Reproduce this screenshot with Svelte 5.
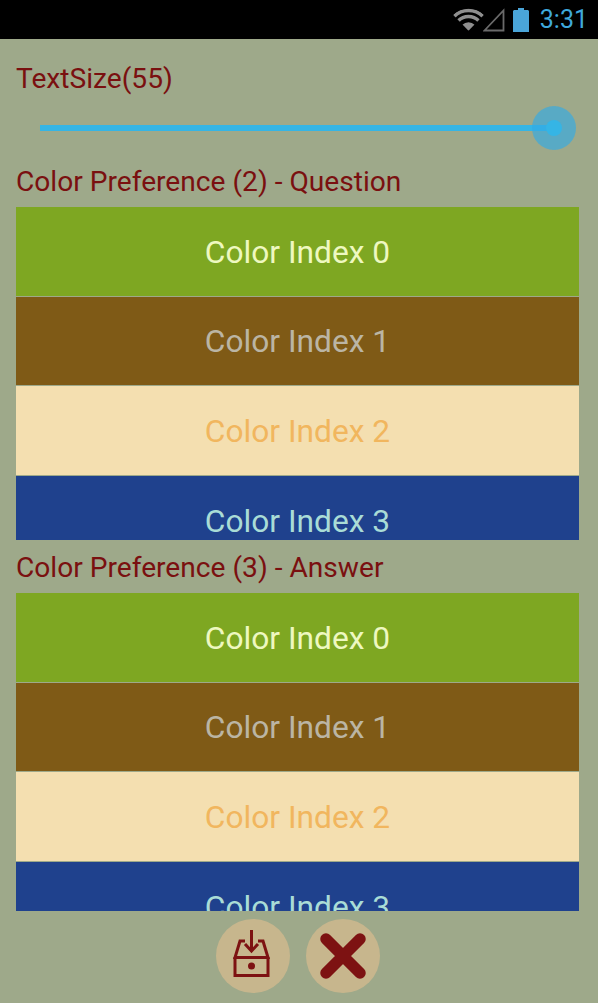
<script>
  const rows = [
    { bg: '#7ea722', fg: '#eef8c0' },
    { bg: '#7f5a16', fg: '#bbb5a4' },
    { bg: '#f4dfb0', fg: '#f1b65e' },
    { bg: '#1f418d', fg: '#a9dcd6' }
  ];
  const lists = [
    { title: 'Color Preference (2) - Question', cls: 'q' },
    { title: 'Color Preference (3) - Answer', cls: 'a' }
  ];
</script>

<div class="screen">
  <header class="status">
    <svg class="wifi" width="31" height="23" viewBox="0 0 30 22">
      <defs>
        <clipPath id="wedge"><path d="M15 22 L0 6.500 A21 21 0 0 1 30 6.500 Z" /></clipPath>
      </defs>
      <g clip-path="url(#wedge)" fill="none" stroke="#8f8f8f" stroke-width="3.400">
        <circle cx="15" cy="22" r="19.800" />
        <circle cx="15" cy="22" r="14" />
        <circle cx="15" cy="22" r="4.200" stroke-width="8.400" />
      </g>
    </svg>
    <svg class="signal" width="22" height="24" viewBox="0 0 22 24">
      <path d="M1.500 22.500 L20.500 2.500 V22.500 Z" fill="none" stroke="#6a6a6a" stroke-width="1.800"/>
    </svg>
    <svg class="battery" width="16" height="24" viewBox="0 0 16 24">
      <path d="M5 0 H11 V2 H15 L16 3 V24 H0 V3 L1 2 H5 Z" fill="#4aa5d8"/>
    </svg>
    <span class="time">3:31</span>
  </header>

  <main class="content">
    <div class="size-label">TextSize(55)</div>
    <div class="slider">
      <div class="track"></div>
      <div class="halo"><div class="thumb"></div></div>
    </div>

    {#each lists as list}
      <div class="title">{list.title}</div>
      <div class="list {list.cls}">
        {#each rows as r, i}
          <div class="row" style="background:{r.bg};color:{r.fg}">Color Index {i}</div>
        {/each}
      </div>
    {/each}
  </main>

  <footer class="actions">
    <button class="round" aria-label="Save">
      <svg width="40" height="52" viewBox="0 0 40 52" fill="none" stroke="#7d1212" stroke-width="3">
        <path d="M18.500 0 V20" />
        <path d="M12 14 L18.500 21 L25 14" />
        <path d="M12 11 H7 L2 27.500 H35 L30 11 H25" />
        <path d="M2 27 V45.500 H35 V27" />
        <circle cx="18.500" cy="36" r="3.500" fill="#7d1212" stroke="none"/>
      </svg>
    </button>
    <button class="round" aria-label="Cancel">
      <svg width="46" height="46" viewBox="0 0 46 46">
        <path d="M6 6 L40 40 M40 6 L6 40" stroke="#7d1212" stroke-width="11.500" stroke-linecap="round"/>
      </svg>
    </button>
  </footer>
</div>

<style>
  :global(body) { margin: 0; }
  .screen {
    width: 598px;
    height: 1003px;
    display: flex;
    flex-direction: column;
    background: #9ea98a;
    font-family: Roboto, sans-serif;
    overflow: hidden;
  }
  .status {
    height: 39px;
    background: #000;
    display: flex;
    align-items: center;
    justify-content: flex-end;
    padding-right: 10px;
    flex: none;
  }
  .wifi { margin-right: -1px; }
  .signal { margin-right: 8px; }
  .battery { margin-right: 11px; }
  .time { color: #3fa9dc; font-size: 25px; line-height: 39px; }
  .content { padding: 0 19px 0 16px; flex: none; }
  .size-label, .title {
    color: #7a1010;
    font-size: 28.150px;
  }
  .size-label { margin-top: 20px; line-height: 40px; }
  .slider { position: relative; height: 55px; }
  .track {
    position: absolute;
    left: 24px; right: 25px; top: 26px;
    height: 6px;
    background: #35b5e5;
  }
  .halo {
    position: absolute;
    right: 3px; top: 7px;
    width: 44px; height: 44px;
    border-radius: 50%;
    background: rgba(51, 170, 229, 0.65);
    display: flex;
    align-items: center;
    justify-content: center;
  }
  .thumb { width: 16px; height: 16px; border-radius: 50%; background: #35b5e5; }
  .title { line-height: 55px; height: 53px; }
  .list { overflow: hidden; }
  .list.q { height: 333px; }
  .list.a { height: 318px; }
  .row {
    box-sizing: border-box;
    height: 88.670px;
    padding-top: 2px;
    margin-bottom: 1px;
    font-size: 31.700px;
    display: flex;
    align-items: center;
    justify-content: center;
  }
  .actions {
    display: flex;
    justify-content: center;
    gap: 16px;
    padding: 8px 3px 0 0;
    flex: none;
  }
  .round {
    width: 74px; height: 74px;
    padding: 0;
    border: none;
    border-radius: 50%;
    background: #c7b68d;
    display: flex;
    align-items: center;
    justify-content: center;
  }
</style>
